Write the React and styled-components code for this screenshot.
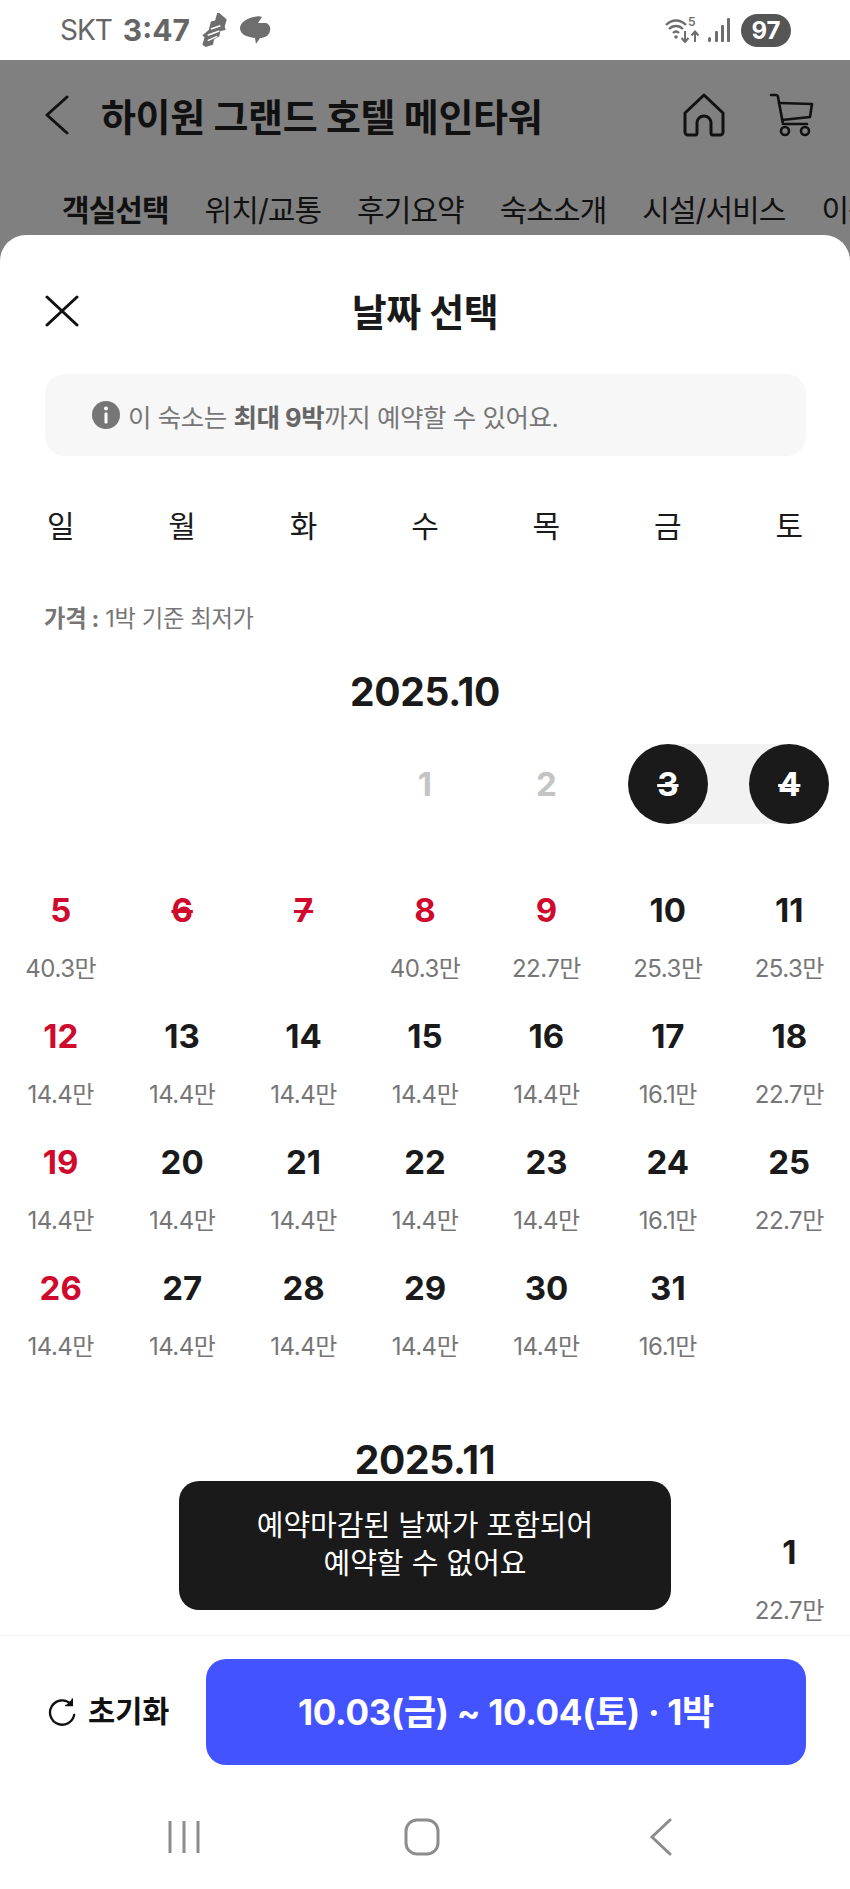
import React from "react";
import styled, { createGlobalStyle, css } from "styled-components";

const FONT = `Inter, "Noto Sans CJK KR", "Noto Sans", sans-serif`;

const GlobalStyle = createGlobalStyle`
  html, body {
    margin: 0;
    padding: 0;
    background: #fff;
  }
  * {
    box-sizing: border-box;
  }
  body {
    font-family: ${FONT};
    color: #1a1a1a;
  }
`;

const WEEKDAYS = ["일", "월", "화", "수", "목", "금", "토"];
const TABS = ["객실선택", "위치/교통", "후기요약", "숙소소개", "시설/서비스", "이용안내"];

const OCTOBER = [
  null,
  null,
  null,
  { day: 1, tone: "muted" },
  { day: 2, tone: "muted" },
  { day: 3, selected: "start", closed: true },
  { day: 4, selected: "end", closed: true },
  { day: 5, tone: "red", price: "40.3만" },
  { day: 6, tone: "red", closed: true },
  { day: 7, tone: "red", closed: true },
  { day: 8, tone: "red", price: "40.3만" },
  { day: 9, tone: "red", price: "22.7만" },
  { day: 10, price: "25.3만" },
  { day: 11, price: "25.3만" },
  { day: 12, tone: "red", price: "14.4만" },
  { day: 13, price: "14.4만" },
  { day: 14, price: "14.4만" },
  { day: 15, price: "14.4만" },
  { day: 16, price: "14.4만" },
  { day: 17, price: "16.1만" },
  { day: 18, price: "22.7만" },
  { day: 19, tone: "red", price: "14.4만" },
  { day: 20, price: "14.4만" },
  { day: 21, price: "14.4만" },
  { day: 22, price: "14.4만" },
  { day: 23, price: "14.4만" },
  { day: 24, price: "16.1만" },
  { day: 25, price: "22.7만" },
  { day: 26, tone: "red", price: "14.4만" },
  { day: 27, price: "14.4만" },
  { day: 28, price: "14.4만" },
  { day: 29, price: "14.4만" },
  { day: 30, price: "14.4만" },
  { day: 31, price: "16.1만" },
];

const NOVEMBER = [null, null, null, null, null, null, { day: 1, price: "22.7만" }];

export default function App() {
  const renderMonth = (title, days) => (
    <Month key={title}>
      <MonthTitle>{title}</MonthTitle>
      <DayGrid>
        {days.map((item, index) =>
          item ? (
            <DayCell key={item.day} range={item.selected}>
              <DayNumber tone={item.tone} selected={!!item.selected} closed={item.closed}>
                {item.day}
              </DayNumber>
              {item.price && <Price>{item.price}</Price>}
            </DayCell>
          ) : (
            <DayCell key={`empty-${index}`} />
          )
        )}
      </DayGrid>
    </Month>
  );

  return (
    <>
      <GlobalStyle />
      <Page>
        <StatusBar>
          <StatusLeft>
            <Carrier>SKT</Carrier>
            <Clock>3:47</Clock>
            <svg width="30" height="36" viewBox="0 0 28 34" fill="none">
              <path d="M20 1l7 6-2 7 1 3-5 1-1 5-5 3-1 5-7 2-3-2 2-7-2-2 6-5 2-8 4-1 2-7z" fill="#6e6e6e" />
              <path d="M9 27l9-4M9 22l11-4M12 16l9-3" stroke="#fff" strokeWidth="1.400" />
            </svg>
            <svg width="35" height="30" viewBox="-4 0 35 30">
              <path
                d="M14 2c3-1 6-1 8 0l-4 6h8c3 1 5 4 4 8-1 5-6 7-10 7-1 2-3 4-4 6l-1-6C6 22 0 19 0 13 0 8 7 3 14 2z"
                fill="#6e6e6e"
              />
            </svg>
          </StatusLeft>
          <StatusRight>
            <svg width="36" height="30" viewBox="0 0 36 30" fill="none" stroke="#6e6e6e" strokeWidth="2.400">
              <path d="M1 10c6-6 14-6 20 0M4 14c4-4 10-4 14 0M8 18c2-2 4-2 6 0" />
              <circle cx="11" cy="22" r="1.800" fill="#6e6e6e" stroke="none" />
              <path d="M20 16v11M16.500 23l3.500 4 3.500-4M30 27v-10M26.500 20.500l3.500-4 3.500 4" strokeWidth="2" />
              <text x="23" y="11" fontSize="12" fontWeight="600" fill="#6e6e6e" stroke="none" fontFamily="Inter">
                5
              </text>
            </svg>
            <svg width="24" height="28" viewBox="0 0 24 28" fill="#6e6e6e">
              <rect x="1" y="21" width="3" height="5" rx="1.500" />
              <rect x="8" y="15" width="3" height="11" rx="1" />
              <rect x="14" y="9" width="3" height="17" rx="1" />
              <rect x="20" y="2" width="3" height="24" rx="1" />
            </svg>
            <Battery>97</Battery>
          </StatusRight>
        </StatusBar>

        <DimmedHeader>
          <HotelBar>
            <HotelLeft>
              <svg width="26" height="40" viewBox="0 0 26 40" fill="none" stroke="#111" strokeWidth="3" strokeLinecap="round" strokeLinejoin="round">
                <path d="M23 2L3 20l20 18" />
              </svg>
              <HotelName>하이원 그랜드 호텔 메인타워</HotelName>
            </HotelLeft>
            <HotelActions>
              <svg width="42" height="44" viewBox="0 0 42 44" fill="none" stroke="#111" strokeWidth="3" strokeLinejoin="round" strokeLinecap="round">
                <path d="M21 2L2 20v19a3 3 0 003 3h7a2 2 0 002-2V30a7 7 0 0114 0v10a2 2 0 002 2h7a3 3 0 003-3V20L21 2z" />
              </svg>
              <svg width="46" height="44" viewBox="0 0 46 44" fill="none" stroke="#111" strokeWidth="2.600" strokeLinejoin="round" strokeLinecap="round">
                <path d="M2 2h5c1 0 2 1 2 2l5 27h24" />
                <path d="M10 10l33 1-2 13-28 3" />
                <circle cx="16" cy="38" r="4" />
                <circle cx="36" cy="38" r="4" />
              </svg>
            </HotelActions>
          </HotelBar>
          <Tabs>
            {TABS.map((tab, index) => (
              <Tab key={tab} active={index === 0}>
                {tab}
              </Tab>
            ))}
          </Tabs>
        </DimmedHeader>

        <Sheet>
          <SheetScroll>
            <SheetHeader>
              <CloseButton>
                <svg width="34" height="32" viewBox="0 0 34 32" fill="none" stroke="#111" strokeWidth="3" strokeLinecap="round">
                  <path d="M2 2l30 28M32 2L2 30" />
                </svg>
              </CloseButton>
              <SheetTitle>날짜 선택</SheetTitle>
            </SheetHeader>

            <InfoBox>
              <svg width="30" height="30" viewBox="0 0 30 30">
                <circle cx="15" cy="15" r="14" fill="#767676" />
                <circle cx="15" cy="8.500" r="2" fill="#fff" />
                <rect x="13.500" y="12.500" width="3" height="11" rx="1" fill="#fff" />
              </svg>
              <InfoText>
                이 숙소는 <strong>최대 9박</strong>까지 예약할 수 있어요.
              </InfoText>
            </InfoBox>

            <WeekRow>
              {WEEKDAYS.map((day) => (
                <WeekDay key={day}>{day}</WeekDay>
              ))}
            </WeekRow>

            <PriceNote>
              <strong>가격 :</strong> 1박 기준 최저가
            </PriceNote>

            {renderMonth("2025.10", OCTOBER)}
            {renderMonth("2025.11", NOVEMBER)}
          </SheetScroll>

          <Toast>
            예약마감된 날짜가 포함되어
            <br />
            예약할 수 없어요
          </Toast>

          <Footer>
            <ResetButton>
              <svg width="30" height="30" viewBox="0 0 32 32" fill="none" stroke="#111" strokeWidth="2.500" strokeLinecap="round">
                <path d="M25 7a13 13 0 10 4 12" />
                <path d="M27 2v7h-7" fill="#111" strokeWidth="1.500" />
              </svg>
              <ResetLabel>초기화</ResetLabel>
            </ResetButton>
            <ConfirmButton>
              <ConfirmLabel>10.03(금) ~ 10.04(토) · 1박</ConfirmLabel>
            </ConfirmButton>
          </Footer>

          <NavBar>
            <svg width="34" height="36" viewBox="0 0 34 36" fill="none" stroke="#8c8c8c" strokeWidth="3">
              <path d="M3 2v32M17 2v32M31 2v32" />
            </svg>
            <svg width="36" height="38" viewBox="0 0 36 38" fill="none" stroke="#8c8c8c" strokeWidth="3">
              <rect x="2" y="2" width="32" height="34" rx="11" />
            </svg>
            <svg width="24" height="38" viewBox="0 0 24 38" fill="none" stroke="#8c8c8c" strokeWidth="3" strokeLinecap="round">
              <path d="M21 2L3 19l18 17" />
            </svg>
          </NavBar>
        </Sheet>
      </Page>
    </>
  );
}

const Page = styled.div`
  display: flex;
  flex-direction: column;
  width: 850px;
  height: 1889px;
  overflow: hidden;
  background: #808080;
`;

const StatusBar = styled.div`
  display: flex;
  align-items: center;
  justify-content: space-between;
  height: 60px;
  padding: 13px 59px 13px 60px;
  background: #fff;
  color: #666;
`;

const StatusLeft = styled.div`
  display: flex;
  align-items: center;
  gap: 8px;
`;

const Carrier = styled.span`
  margin-right: 3px;
  font-size: 28px;
  letter-spacing: -1px;
`;

const Clock = styled.span`
  margin-right: 0;
  font-size: 30px;
  font-weight: 700;
`;

const StatusRight = styled.div`
  display: flex;
  align-items: center;
  gap: 6px;
`;

const Battery = styled.span`
  display: flex;
  align-items: center;
  justify-content: center;
  width: 50px;
  height: 33px;
  margin-left: 4px;
  border-radius: 17px;
  background: #555;
  color: #fff;
  font-size: 24px;
  font-weight: 700;
`;

const DimmedHeader = styled.div`
  display: flex;
  flex-direction: column;
  height: 175px;
  flex-shrink: 0;
  color: #111;
`;

const HotelBar = styled.div`
  display: flex;
  align-items: center;
  justify-content: space-between;
  height: 110px;
  padding: 0 35px 0 44px;
`;

const HotelLeft = styled.div`
  display: flex;
  align-items: center;
  gap: 31px;
`;

const HotelName = styled.h1`
  margin: -2px 0 0;
  font-size: 38px;
  font-weight: 700;
  letter-spacing: -0.350px;
`;

const HotelActions = styled.div`
  display: flex;
  align-items: center;
  gap: 44px;
`;

const Tabs = styled.div`
  display: flex;
  gap: 36px;
  padding: 18px 0 0 62px;
  white-space: nowrap;
`;

const Tab = styled.span`
  font-size: 30px;
  line-height: 44px;
  letter-spacing: -0.950px;
  font-weight: ${(props) => (props.active ? 700 : 400)};
`;

const Sheet = styled.div`
  position: relative;
  display: flex;
  flex: 1;
  min-height: 0;
  flex-direction: column;
  border-radius: 26px 26px 0 0;
  background: #fff;
`;

const SheetScroll = styled.div`
  flex: 1;
  min-height: 0;
  overflow: hidden;
  padding-top: 46px;
`;

const SheetHeader = styled.div`
  position: relative;
  display: flex;
  align-items: center;
  justify-content: center;
  height: 60px;
`;

const CloseButton = styled.div`
  position: absolute;
  top: 14px;
  left: 45px;
  display: flex;
`;

const SheetTitle = styled.h2`
  margin: -4px 0 0;
  font-size: 38px;
  font-weight: 700;
  letter-spacing: -0.500px;
`;

const InfoBox = styled.div`
  display: flex;
  align-items: center;
  gap: 7px;
  height: 82px;
  margin: 33px 44px 0 45px;
  padding-left: 46px;
  border-radius: 20px;
  background: #f7f7f7;
`;

const InfoText = styled.p`
  margin: 0;
  color: #767676;
  font-size: 25.500px;
  letter-spacing: -0.450px;
  strong {
    color: #666;
    font-weight: 700;
  }
`;

const WeekRow = styled.div`
  display: grid;
  grid-template-columns: repeat(7, 1fr);
  height: 50px;
  margin-top: 45px;
`;

const WeekDay = styled.span`
  font-size: 30px;
  line-height: 50px;
  text-align: center;
`;

const PriceNote = styled.p`
  height: 30px;
  margin: 53px 0 0 44px;
  color: #767676;
  font-size: 23.300px;
  line-height: 30px;
  letter-spacing: -0.300px;
  strong {
    font-weight: 700;
  }
`;

const Month = styled.section`
  margin-top: 33px;
  & + & {
    margin-top: 61px;
  }
`;

const MonthTitle = styled.h3`
  height: 50px;
  margin: 0 0 27px;
  font-size: 39px;
  font-weight: 700;
  line-height: 50px;
  letter-spacing: -0.300px;
  text-align: center;
`;

const DayGrid = styled.div`
  display: grid;
  grid-template-columns: repeat(7, 1fr);
  grid-auto-rows: 126px;
`;

const DayCell = styled.div`
  position: relative;
  display: flex;
  flex-direction: column;
  align-items: center;
  ${(props) =>
    props.range &&
    css`
      &::before {
        content: "";
        position: absolute;
        top: 0;
        left: ${props.range === "start" ? "50%" : "0"};
        right: ${props.range === "start" ? "0" : "50%"};
        height: 80px;
        background: #f2f2f2;
      }
    `}
`;

const TONES = {
  red: "#cf0a2c",
  muted: "#c4c4c4",
};

const DayNumber = styled.span`
  position: relative;
  display: flex;
  align-items: center;
  justify-content: center;
  width: 80px;
  height: 80px;
  border-radius: 50%;
  font-size: 33px;
  font-weight: 700;
  color: ${(props) => (props.selected ? "#fff" : TONES[props.tone] || "#1a1a1a")};
  background: ${(props) => (props.selected ? "#1a1a1a" : "transparent")};
  text-decoration: ${(props) => (props.closed ? "line-through" : "none")};
`;

const Price = styled.span`
  margin-top: 4px;
  color: #767676;
  font-size: 24px;
  line-height: 30px;
  letter-spacing: -0.500px;
`;

const Toast = styled.div`
  position: absolute;
  top: 1246px;
  left: 179px;
  width: 492px;
  height: 129px;
  padding-top: 26px;
  border-radius: 20px;
  background: #1a1a1a;
  color: #fff;
  font-size: 29px;
  line-height: 38px;
  text-align: center;
`;

const Footer = styled.div`
  display: flex;
  align-items: center;
  justify-content: space-between;
  height: 153px;
  padding: 0 44px 0 47px;
  border-top: 1px solid #f2f2f2;
  background: #fff;
`;

const ResetButton = styled.div`
  display: flex;
  align-items: center;
  gap: 11px;
  color: #111;
`;

const ResetLabel = styled.span`
  margin-top: -6px;
  font-size: 29.500px;
  font-weight: 700;
  white-space: nowrap;
`;

const ConfirmButton = styled.div`
  display: flex;
  align-items: center;
  justify-content: center;
  width: 600px;
  height: 106px;
  border-radius: 20px;
  background: #4353ff;
  color: #fff;
`;

const ConfirmLabel = styled.span`
  margin-top: -6px;
  font-size: 35px;
  font-weight: 700;
  letter-spacing: -0.300px;
`;

const NavBar = styled.div`
  display: grid;
  grid-template-columns: 237px 245px 24px;
  align-items: center;
  height: 101px;
  padding: 0 0 3px 167px;
  background: #fff;
`;
